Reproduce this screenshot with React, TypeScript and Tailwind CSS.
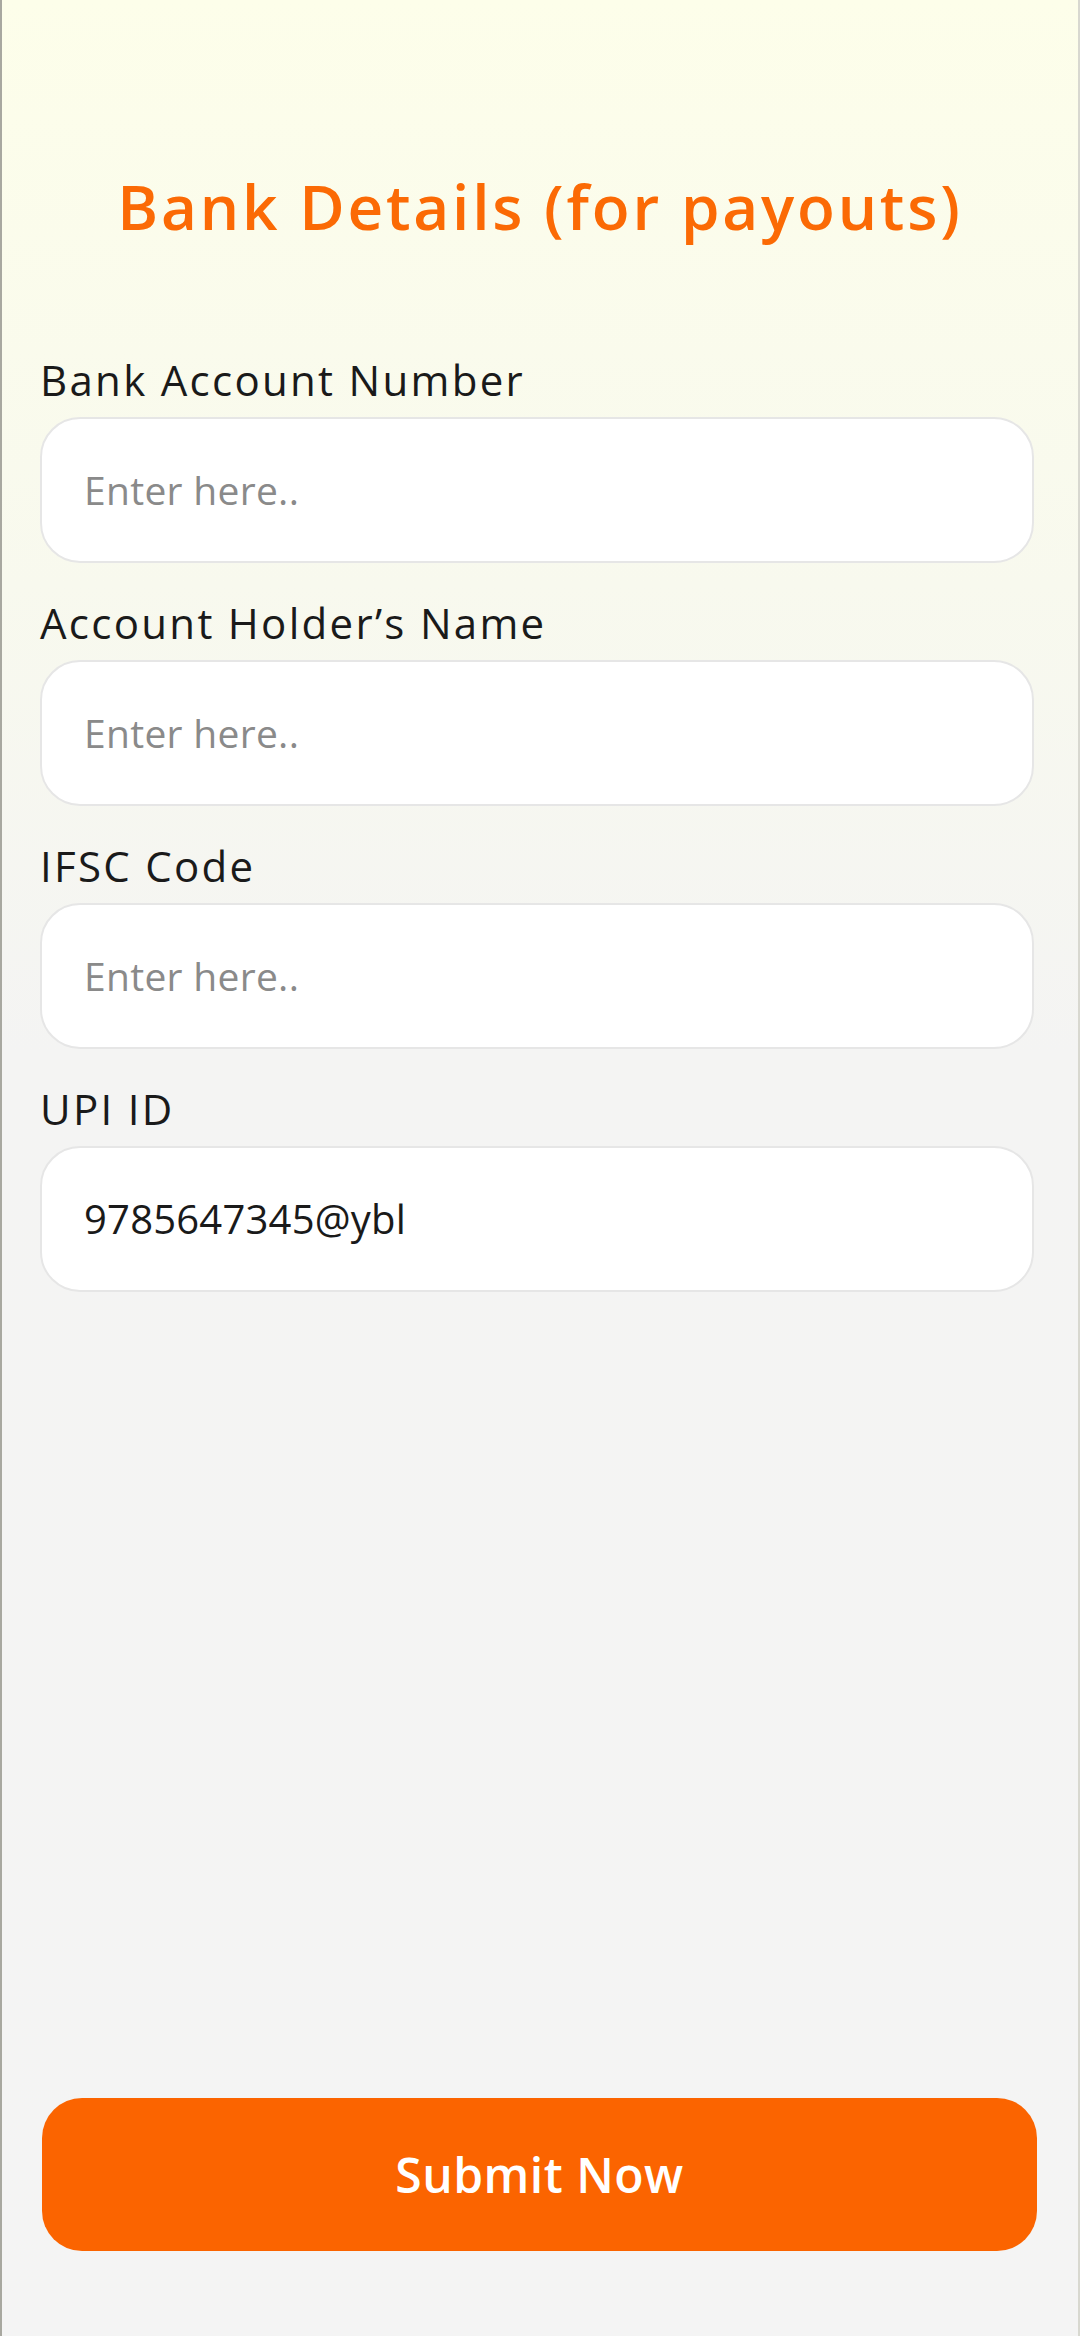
import React from "react";

const font = { fontFamily: "'Open Sans', 'Noto Sans', sans-serif" };

function Field({ label, value }: { label: string; value?: string }) {
  return (
    <div className="flex flex-col">
      <div className="h-[50px] flex items-center text-[42px] leading-[50px] text-[#1a1a1a] tracking-[2.3px]">
        {label}
      </div>
      <div className="mt-[12px] h-[146px] rounded-[40px] bg-white border-2 border-[#e6e6e6] flex items-center pl-[42px]">
        {value ? (
          <span className="text-[40px] text-[#1a1a1a] tracking-[0.2px]">{value}</span>
        ) : (
          <span className="text-[39px] text-[#8a8a8a] tracking-[0.3px]">Enter here..</span>
        )}
      </div>
    </div>
  );
}

export default function App() {
  return (
    <div
      style={font}
      className="w-[1080px] h-[2336px] flex flex-col border-l-2 border-l-[#a8a8a0] border-r-2 border-r-[#d8d8d0] bg-[linear-gradient(180deg,#fdfeea_0%,#f8f9ee_25%,#f4f4f3_45%,#f4f4f4_100%)]"
    >
      <div className="pt-[170px] flex justify-center">
        <h1 className="h-[72px] text-[62px] leading-[72px] font-semibold text-[#fb6a05] tracking-[2.8px]">
          Bank Details (for payouts)
        </h1>
      </div>
      <div className="mt-[113px] pl-[38px] pr-[44px] flex flex-col gap-[35px]">
        <Field label="Bank Account Number" />
        <Field label="Account Holder’s Name" />
        <Field label="IFSC Code" />
        <Field label="UPI ID" value="9785647345@ybl" />
      </div>
      <div className="flex-1" />
      <div className="pl-[40px] pr-[41px] pb-[85px]">
        <button className="w-full h-[153px] rounded-[40px] bg-[#fb6400] text-white text-[48px] font-semibold tracking-[0.5px] flex items-center justify-center">
          Submit Now
        </button>
      </div>
    </div>
  );
}
